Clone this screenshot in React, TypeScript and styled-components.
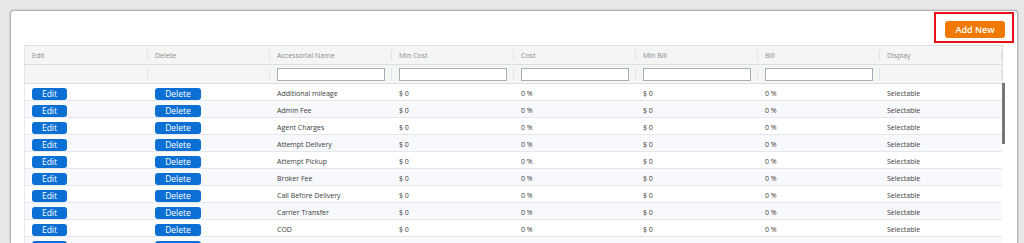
import styled, { createGlobalStyle } from "styled-components";

interface Accessorial {
  name: string;
  minCost: string;
  cost: string;
  minBill: string;
  bill: string;
  display: string;
}

const NAMES = [
  "Additional mileage",
  "Admin Fee",
  "Agent Charges",
  "Attempt Delivery",
  "Attempt Pickup",
  "Broker Fee",
  "Call Before Delivery",
  "Carrier Transfer",
  "COD",
  "Construction Site",
  "Convention Center",
  "Detention",
];

const ROWS: Accessorial[] = NAMES.map((name) => ({
  name,
  minCost: "$ 0",
  cost: "0 %",
  minBill: "$ 0",
  bill: "0 %",
  display: "Selectable",
}));

const HEADERS = ["Edit", "Delete", "Accessorial Name", "Min Cost", "Cost", "Min Bill", "Bill", "Display"];
const FILTERABLE = [false, false, true, true, true, true, true, false];

const GlobalStyle = createGlobalStyle`
  html, body {
    margin: 0;
    padding: 0;
    overflow: hidden;
    background: #e8e8e8;
  }
  body {
    font-family: "Segoe UI", "Open Sans", sans-serif;
  }
`;

const Page = styled.div`
  height: 243px;
  box-sizing: border-box;
  padding: 10px 6px 0 10px;
`;

const Panel = styled.div`
  height: 100%;
  box-sizing: border-box;
  display: flex;
  flex-direction: column;
  background: #fff;
  border: 1px solid #b3b3b3;
  border-bottom: none;
  border-radius: 4px 4px 0 0;
  box-shadow: 0 0 2px rgba(0, 0, 0, 0.25);
  padding: 1px 3px 0 13px;
  overflow: hidden;
`;

const Toolbar = styled.div`
  display: flex;
  justify-content: flex-end;
  margin-bottom: 2px;
`;

const Highlight = styled.div`
  border: 2px solid #e5121a;
  padding: 7px 7px 3px 9px;
`;

const AddButton = styled.button`
  width: 60px;
  height: 17px;
  padding: 0;
  border: none;
  border-radius: 3px;
  background: #f07a00;
  color: #fff;
  font-family: inherit;
  font-size: 9px;
  font-weight: 600;
  display: block;
`;

const Table = styled.div`
  width: 981px;
  display: flex;
  flex-direction: column;
`;

const HeaderBlock = styled.div`
  width: 979px;
  box-sizing: border-box;
  border-top: 1px solid #dcdfe1;
  border-left: 1px solid #e3e6e8;
  border-right: 1px solid #dcdfe1;
  background: #f4f5f5;
`;

const GridRow = styled.div`
  display: grid;
  grid-template-columns: 123px repeat(7, 122px);
  box-sizing: border-box;
`;

const HeadRow = styled(GridRow)`
  height: 19px;
  border-bottom: 1px solid #dcdfe1;
`;

const HeadCell = styled.div`
  display: flex;
  align-items: center;
  padding-left: 7px;
  font-size: 7px;
  color: #8c8c8c;
  white-space: nowrap;
`;

const CellContent = styled.div`
  flex: 1;
  min-width: 0;
`;

const Separator = styled.div`
  width: 1px;
  height: 10px;
  background: #e0e2e4;
`;

const FilterInput = styled.input`
  display: block;
  width: 108px;
  height: 13px;
  box-sizing: border-box;
  padding: 0;
  border: 1px solid #a9b0b3;
  background: #fff;
`;

const Body = styled.div`
  display: flex;
`;

const BodyRows = styled.div`
  width: 978px;
  box-sizing: border-box;
  border-left: 1px solid #e6e9ec;
`;

const DataRow = styled(GridRow)<{ $alt: boolean }>`
  height: 17px;
  padding-top: 3px;
  border-bottom: 1px solid #e4e8ec;
  background: ${(p) => (p.$alt ? "#f7f9fc" : "#fff")};
`;

const DataCell = styled.div`
  display: flex;
  align-items: center;
  padding-left: 7px;
  font-size: 7px;
  color: #3c3c3c;
  white-space: nowrap;
`;

const ActionButton = styled.button<{ $w: number }>`
  width: ${(p) => p.$w}px;
  height: 12px;
  padding: 0;
  border: none;
  border-radius: 3px;
  background: #0b6fd3;
  color: #fff;
  font-family: inherit;
  font-size: 8.5px;
  line-height: 12px;
`;

const ScrollTrack = styled.div`
  width: 3px;
`;

const ScrollThumb = styled.div`
  height: 61px;
  margin-top: -1px;
  background: #777;
`;

const App = () => {
  return (
    <>
      <GlobalStyle />
      <Page>
        <Panel>
          <Toolbar>
            <Highlight>
              <AddButton>Add New</AddButton>
            </Highlight>
          </Toolbar>
          <Table>
            <HeaderBlock>
              <HeadRow>
                {HEADERS.map((h) => (
                  <HeadCell key={h}>
                    <CellContent>{h}</CellContent>
                    <Separator />
                  </HeadCell>
                ))}
              </HeadRow>
              <HeadRow>
                {HEADERS.map((h, i) => (
                  <HeadCell key={`filter-${h}`}>
                    <CellContent>{FILTERABLE[i] && <FilterInput type="text" />}</CellContent>
                    <Separator />
                  </HeadCell>
                ))}
              </HeadRow>
            </HeaderBlock>
            <Body>
              <BodyRows>
                {ROWS.map((row, index) => (
                  <DataRow key={`row-${index}`} $alt={index % 2 === 1}>
                    <DataCell>
                      <ActionButton $w={35}>Edit</ActionButton>
                    </DataCell>
                    <DataCell>
                      <ActionButton $w={46}>Delete</ActionButton>
                    </DataCell>
                    <DataCell>{row.name}</DataCell>
                    <DataCell>{row.minCost}</DataCell>
                    <DataCell>{row.cost}</DataCell>
                    <DataCell>{row.minBill}</DataCell>
                    <DataCell>{row.bill}</DataCell>
                    <DataCell>{row.display}</DataCell>
                  </DataRow>
                ))}
              </BodyRows>
              <ScrollTrack>
                <ScrollThumb />
              </ScrollTrack>
            </Body>
          </Table>
        </Panel>
      </Page>
    </>
  );
};

export default App;
